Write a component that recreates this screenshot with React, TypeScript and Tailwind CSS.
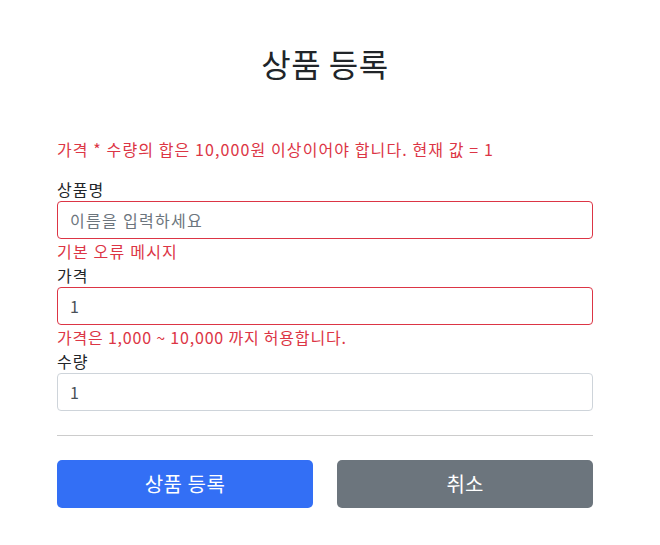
import React from "react";

export default function App() {
  return (
    <div
      className="w-[660px] min-h-[545px] bg-white text-[#212529]"
      style={{ fontFamily: '"Noto Sans CJK KR", "Noto Sans", sans-serif' }}
    >
      <div className="ml-[57px] w-[536px] pt-[44px]">
        <h2 className="text-center text-[32px] leading-[38px] font-normal h-[38px] tracking-[0.5px]">상품 등록</h2>
        <div className="mt-[55px] text-[16px] leading-[24px] text-[#dc3545] tracking-[1.1px]">
          가격 * 수량의 합은 10,000원 이상이어야 합니다. 현재 값 = 1
        </div>
        <div className="mt-[16px]">
          <label className="block text-[16px] leading-[24px] tracking-[1px]">상품명</label>
          <input
            className="block w-full h-[38px] rounded-[4px] border border-[#dc3545] px-[12px] text-[16px] tracking-[1.3px] text-[#495057] placeholder:text-[#6c757d] outline-none"
            placeholder="이름을 입력하세요"
            readOnly
          />
          <div className="text-[16px] leading-[24px] text-[#dc3545] tracking-[1.2px]">기본 오류 메시지</div>
        </div>
        <div>
          <label className="block text-[16px] leading-[24px] tracking-[1px]">가격</label>
          <input
            className="block w-full h-[38px] rounded-[4px] border border-[#dc3545] px-[12px] text-[16px] text-[#495057] outline-none"
            value="1"
            readOnly
          />
          <div className="text-[16px] leading-[24px] text-[#dc3545] tracking-[0.8px]">가격은 1,000 ~ 10,000 까지 허용합니다.</div>
        </div>
        <div>
          <label className="block text-[16px] leading-[24px] tracking-[1px]">수량</label>
          <input
            className="block w-full h-[38px] rounded-[4px] border border-[#ced4da] px-[12px] text-[16px] text-[#495057] outline-none"
            value="1"
            readOnly
          />
        </div>
        <div className="mt-[24px] h-px bg-[#cccccc]" />
        <div className="mt-[24px] grid grid-cols-2 gap-[24px]">
          <button className="h-[48px] rounded-[5px] bg-[#336ff5] text-white text-[20px] tracking-[0.5px]">상품 등록</button>
          <button className="h-[48px] rounded-[5px] bg-[#6c757d] text-white text-[20px]">취소</button>
        </div>
      </div>
    </div>
  );
}
